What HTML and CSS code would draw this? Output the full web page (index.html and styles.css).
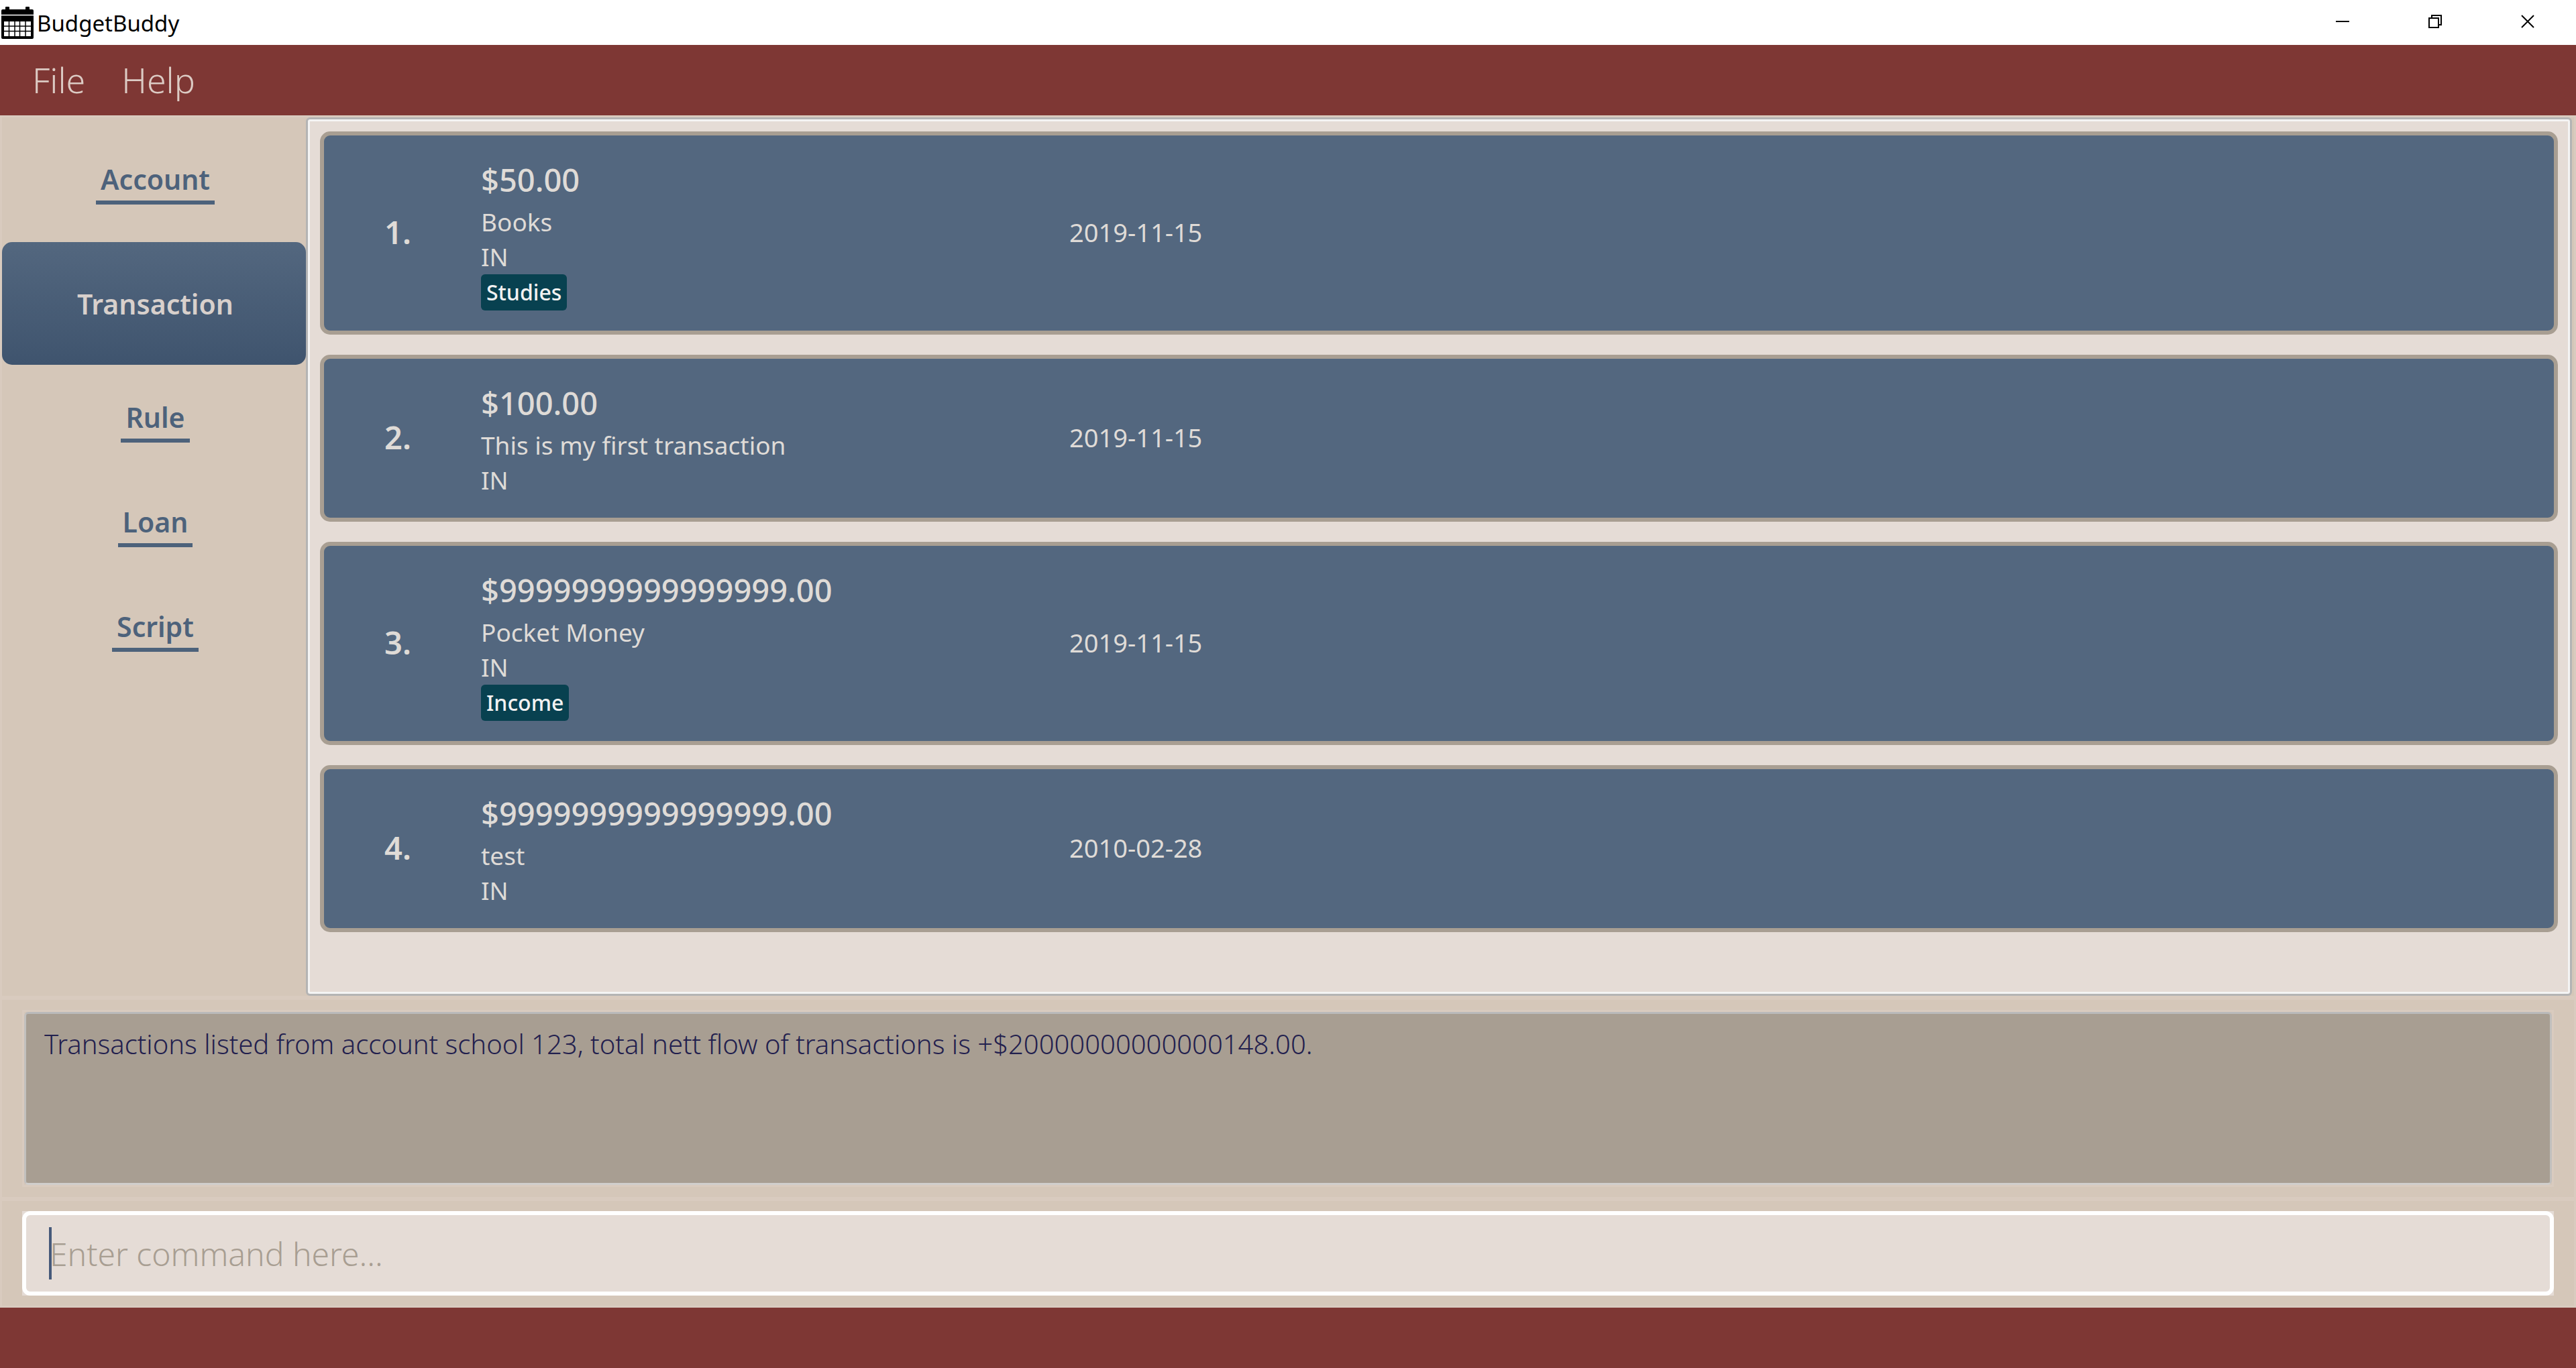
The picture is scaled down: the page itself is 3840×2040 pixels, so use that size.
FILE: index.html
```html
<!DOCTYPE html>
<html lang="en">
<head>
<meta charset="utf-8">
<title>BudgetBuddy</title>
<link rel="stylesheet" href="styles.css">
</head>
<body>
<header class="titlebar">
  <svg class="app-icon" viewBox="0 0 48 48" aria-hidden="true">
    <path d="M0 6q0-2 2-2h4V1q0-1 1-1h4q1 0 1 1v3h24V1q0-1 1-1h4q1 0 1 1v3h4q2 0 2 2v40q0 2-2 2H2q-2 0-2-2z"/>
    <path d="M0 12.500h48" stroke="#fff" stroke-width="1.500"/>
    <path d="M4 22h40v22H4z" fill="#fff"/>
    <path d="M4 29h40M4 36.500h40M11.500 22v22M20 22v22M27.500 22v22M36 22v22" stroke="#000" stroke-width="1.500"/>
  </svg>
  <h1 class="app-name">BudgetBuddy</h1>
  <div class="window-controls">
    <button class="window-button" type="button" aria-label="Minimize"><svg viewBox="0 0 20 20"><path d="M0 10h20"/></svg></button>
    <button class="window-button" type="button" aria-label="Restore"><svg viewBox="0 0 20 20"><path d="M1 5h14v14H1zM5 5V1h14v14h-4"/></svg></button>
    <button class="window-button" type="button" aria-label="Close"><svg viewBox="0 0 20 20"><path d="M1 1l18 18M19 1L1 19"/></svg></button>
  </div>
</header>

<nav class="menubar">
  <button class="menu-item" type="button">File</button>
  <button class="menu-item" type="button">Help</button>
</nav>

<main class="workspace pane">
  <nav class="tabs">
    <button class="tab" type="button"><span class="tab-label">Account</span></button>
    <button class="tab tab-active" type="button"><span class="tab-label">Transaction</span></button>
    <button class="tab" type="button"><span class="tab-label">Rule</span></button>
    <button class="tab" type="button"><span class="tab-label">Loan</span></button>
    <button class="tab" type="button"><span class="tab-label">Script</span></button>
  </nav>
  <section class="list-panel">
    <ul class="list">
      <li class="card">
        <span class="card-index">1.</span>
        <div class="card-body">
          <h2 class="amount">$50.00</h2>
          <p class="detail">Books</p>
          <p class="detail">IN</p>
          <span class="tag">Studies</span>
        </div>
        <time class="date">2019-11-15</time>
      </li>
      <li class="card">
        <span class="card-index">2.</span>
        <div class="card-body">
          <h2 class="amount">$100.00</h2>
          <p class="detail">This is my first transaction</p>
          <p class="detail">IN</p>
        </div>
        <time class="date">2019-11-15</time>
      </li>
      <li class="card">
        <span class="card-index">3.</span>
        <div class="card-body">
          <h2 class="amount">$9999999999999999.00</h2>
          <p class="detail">Pocket Money</p>
          <p class="detail">IN</p>
          <span class="tag">Income</span>
        </div>
        <time class="date">2019-11-15</time>
      </li>
      <li class="card">
        <span class="card-index">4.</span>
        <div class="card-body">
          <h2 class="amount">$9999999999999999.00</h2>
          <p class="detail">test</p>
          <p class="detail">IN</p>
        </div>
        <time class="date">2010-02-28</time>
      </li>
    </ul>
  </section>
</main>

<section class="pane pane-padded">
  <div class="result-frame">
    <textarea class="result" readonly aria-label="Result">Transactions listed from account school 123, total nett flow of transactions is +$20000000000000148.00.</textarea>
  </div>
</section>

<section class="pane pane-padded">
  <div class="command">
    <input class="command-input" type="text" placeholder="Enter command here..." aria-label="Command">
    <span class="caret"></span>
  </div>
</section>

<footer class="statusbar"></footer>
</body>
</html>
```

FILE: styles.css
```css
:root {
  --red: #7e3734;
  --sand: #d5c7b9;
  --sand-light: #d9cbbf;
  --cream: #e5dcd6;
  --taupe: #a89e92;
  --slate: #53677f;
  --slate-text: #4d627b;
  --chalk: #dfdbd7;
}

* {
  box-sizing: border-box;
}

body {
  margin: 0;
  min-height: 100vh;
  display: flex;
  flex-direction: column;
  background: var(--sand);
  font-family: "Noto Sans", "Open Sans", sans-serif;
}

button,
input,
textarea {
  font: inherit;
  color: inherit;
  background: none;
  border: 0;
  margin: 0;
  padding: 0;
  outline: none;
}

h1,
h2,
p,
ul {
  margin: 0;
  padding: 0;
  font-weight: inherit;
}

/* Window title bar */
.titlebar {
  display: flex;
  align-items: center;
  height: 67px;
  padding: 0 3px 0 2px;
  background: #fff;
  color: #000;
}

.app-icon {
  width: 48px;
  height: 48px;
}

.app-name {
  margin-left: 5px;
  padding-top: 3px;
  font-size: 33px;
  line-height: 44px;
}

.window-controls {
  display: flex;
  align-self: stretch;
  margin-left: auto;
}

.window-button {
  display: flex;
  align-items: center;
  justify-content: center;
  width: 138px;
  padding-bottom: 3px;
}

.window-button svg {
  width: 20px;
  height: 20px;
  fill: none;
  stroke: #000;
  stroke-width: 2;
}

/* Menu bar */
.menubar {
  display: flex;
  height: 105px;
  padding-left: 21px;
  background: var(--red);
  color: #dccbc4;
}

.menu-item {
  padding: 0 27px 3px;
  font-size: 52px;
  font-weight: 300;
}

/* Panes share a thin highlight border */
.pane {
  border: 3px solid var(--sand-light);
}

.pane-padded {
  padding: 15px 30px;
}

.workspace {
  flex: 1;
  display: flex;
  padding-right: 3px;
}

/* Side tabs */
.tabs {
  display: flex;
  flex-direction: column;
  width: 453px;
  padding-top: 14px;
  font-size: 41px;
  font-weight: 600;
  line-height: 48px;
  color: var(--slate-text);
}

.tab {
  display: flex;
  justify-content: center;
  height: 156px;
  padding: 54px 0 0 4px;
}

.tab-label {
  height: 62px;
  padding: 0 7px;
  border-bottom: 6px solid var(--slate-text);
}

.tab-active {
  align-items: center;
  height: 183px;
  margin-top: 16px;
  padding-top: 0;
  border-radius: 15px;
  background: linear-gradient(var(--slate), #3f546e);
  color: #d8d0cc;
}

.tab-active .tab-label {
  height: auto;
  border: 0;
}

/* Transaction list */
.list-panel {
  flex: 1;
  padding: 18px;
  border: 3px solid #b4b4b4;
  border-radius: 6px;
  background: var(--cream);
  box-shadow: inset 0 0 0 3px #f4f4f4;
}

.list {
  display: flex;
  flex-direction: column;
  gap: 30px;
  list-style: none;
}

.card {
  display: grid;
  grid-template-columns: 234px 877px 1fr;
  align-items: center;
  padding: 29px 0 30px;
  border: 6px solid var(--taupe);
  border-radius: 15px;
  background: var(--slate);
  color: var(--chalk);
}

.card-index {
  padding: 0 14px 2px 0;
  text-align: center;
  font-size: 47px;
  font-weight: 600;
}

.amount {
  font-size: 47px;
  font-weight: 500;
  line-height: 74px;
}

.detail {
  font-size: 37px;
  line-height: 52px;
}

.tag {
  display: block;
  width: fit-content;
  padding: 0 8px;
  border-radius: 6px;
  background: #084150;
  color: #f2f2f2;
  font-size: 32px;
  font-weight: 500;
  line-height: 54px;
}

.date {
  padding-bottom: 2px;
  font-size: 38px;
}

/* Result display */
.result-frame {
  border: 3px solid var(--sand-light);
}

.result {
  display: block;
  width: 100%;
  height: 258px;
  padding: 15px 27px;
  border: 3px solid #c2c0be;
  border-color: #bababa #c2c0be #d0cecc;
  border-radius: 6px;
  background: var(--taupe);
  color: #22204e;
  font-size: 40px;
  font-weight: 300;
  line-height: 60px;
  resize: none;
}

/* Command box */
.command {
  position: relative;
  background: var(--cream);
}

.command-input {
  display: block;
  width: 100%;
  height: 126px;
  padding: 0 35px;
  border: 6px solid #fff;
  border-radius: 12px;
  font-size: 48px;
  font-weight: 300;
}

.command-input::placeholder {
  color: var(--taupe);
  opacity: 1;
}

.caret {
  position: absolute;
  left: 40px;
  top: 24px;
  width: 4px;
  height: 78px;
  background: #46597a;
}

.statusbar {
  height: 90px;
  background: var(--red);
}
```
